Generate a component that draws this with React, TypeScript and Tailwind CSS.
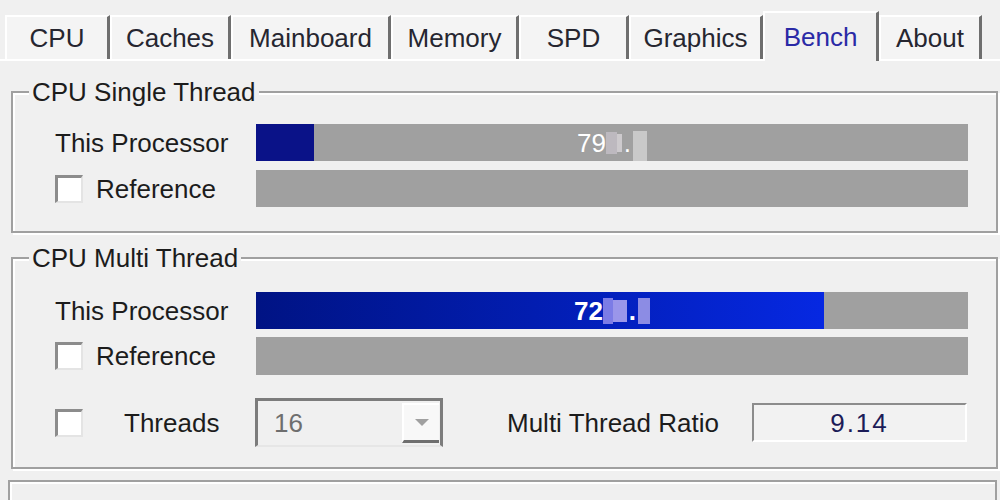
import React from 'react'

const tabs = [
  { label: 'CPU', w: 'w-[105px]' },
  { label: 'Caches', w: 'w-[121px]' },
  { label: 'Mainboard', w: 'w-[160px]' },
  { label: 'Memory', w: 'w-[128px]' },
  { label: 'SPD', w: 'w-[110px]' },
  { label: 'Graphics', w: 'w-[134px]' },
  { label: 'Bench', w: 'w-[116px]', active: true },
  { label: 'About', w: 'w-[103px]' },
]

const Group = ({ title, className, children }: { title: string; className: string; children: React.ReactNode }) => {
  return (
    <div className={`border-2 border-[#a0a0a0] shadow-[inset_2px_2px_0_#ffffff,2px_2px_0_#ffffff] ${className}`}>
      <div className="-mt-[14px] ml-[16px] w-fit bg-[#f0f0f0] px-[3px] leading-[26px]">{title}</div>
      {children}
    </div>
  )
}

const Checkbox = () => (
  <div className="w-[28px] h-[28px] shrink-0 bg-white border-t-[3px] border-l-[3px] border-r-2 border-b-2 border-t-[#8c8c8c] border-l-[#8c8c8c] border-r-[#e4e4e4] border-b-[#e4e4e4]" />
)

const Bar = ({ h, children }: { h: string; children?: React.ReactNode }) => (
  <div className={`grid w-[712px] bg-[#a0a0a0] ${h}`}>{children}</div>
)

export default function App() {
  return (
    <div className="w-[1000px] h-[500px] overflow-hidden bg-[#f0f0f0] text-[26px] leading-[26px] text-[#1c1c1c] font-['Liberation_Sans',Arial,sans-serif]">
      {/* tab strip */}
      <div className="flex items-end h-[59px] pl-[5px]">
        {tabs.map((t) => (
          <div
            key={t.label}
            className={`flex items-center justify-center leading-none border-t-2 border-l-2 border-r-[3px] border-t-white border-l-white border-r-[#6e6e6e] ${t.w} ${
              t.active ? 'relative z-10 h-[50px] -mb-[2px] bg-[#f0f0f0] text-[#2a2aa6]' : 'h-[44px] bg-[#f4f4f4] text-[#262630]'
            }`}
          >
            {t.label}
          </div>
        ))}
      </div>

      <div className="border-t-2 border-white">
        <Group title="CPU Single Thread" className="mt-[30px] ml-[11px] mr-[2px] pb-[24px]">
          <div className="flex items-center mt-[19px]">
            <div className="w-[243px] pl-[42px]">This Processor</div>
            <Bar h="h-[37px]">
              <div className="col-start-1 row-start-1 w-[58px] h-full bg-[#0a1288]" />
              <div className="col-start-1 row-start-1 flex items-center justify-center text-white leading-none">
                <span>79</span>
                <span className="inline-block w-[11px] h-[22px] bg-[#bdb9bf]" />
                <span className="inline-block w-[5px] h-[18px] bg-[#cdcacd]" />
                <span className="px-[2px]">.</span>
                <span className="inline-block w-[14px] h-[30px] mt-[6px] bg-[#c9c9c9]" />
              </div>
            </Bar>
          </div>
          <div className="flex items-center mt-[9px]">
            <div className="w-[243px] pl-[42px] flex items-center gap-[13px]">
              <Checkbox />
              <span>Reference</span>
            </div>
            <Bar h="h-[37px]" />
          </div>
        </Group>

        <Group title="CPU Multi Thread" className="mt-[24px] ml-[11px] mr-[2px] pb-[20px]">
          <div className="flex items-center mt-[21px]">
            <div className="w-[243px] pl-[42px]">This Processor</div>
            <Bar h="h-[37px]">
              <div className="col-start-1 row-start-1 w-[568px] h-full bg-linear-to-r from-[#001384] to-[#0628e2]" />
              <div className="col-start-1 row-start-1 flex items-center justify-center text-white leading-none font-bold">
                <span>72</span>
                <span className="inline-block w-[10px] h-[26px] bg-[#7c7ce6]" />
                <span className="inline-block w-[14px] h-[22px] bg-[#9a96ea]" />
                <span className="px-[2px]">.</span>
                <span className="inline-block w-[12px] h-[26px] bg-[#8c8ce4]" />
              </div>
            </Bar>
          </div>
          <div className="flex items-center mt-[8px]">
            <div className="w-[243px] pl-[42px] flex items-center gap-[13px]">
              <Checkbox />
              <span>Reference</span>
            </div>
            <Bar h="h-[38px]" />
          </div>
          <div className="flex items-center mt-[23px]">
            <div className="w-[242px] pl-[42px] flex items-center gap-[41px]">
              <Checkbox />
              <span>Threads</span>
            </div>
            <div className="w-[188px] h-[49px] flex items-stretch bg-[#f0f0f0] border-t-[3px] border-l-[3px] border-r-[3px] border-b-2 border-t-[#7c7c7c] border-l-[#7c7c7c] border-r-[#7c7c7c] border-b-[#e6e6e6]">
              <div className="flex-1 flex items-center pl-[16px] text-[#6e6e6e]">16</div>
              <div className="w-[37px] my-[2px] mr-[1px] flex items-center justify-center bg-[#f8f8f8] border-t-2 border-l-2 border-b-[3px] border-t-white border-l-white border-b-[#6e6e6e]">
                <svg width="14" height="8" viewBox="0 0 14 8">
                  <path d="M0 0 H14 L7 7 Z" fill="#a0a0a0" />
                </svg>
              </div>
            </div>
            <div className="w-[309px] pl-[64px]">Multi Thread Ratio</div>
            <div className="w-[215px] h-[39px] flex items-center justify-center bg-[#f2f2f2] tracking-[2px] text-[#1c1c58] border-t-2 border-l-2 border-r-2 border-b-2 border-t-[#8c8c8c] border-l-[#8c8c8c] border-r-white border-b-white">
              9.14
            </div>
          </div>
        </Group>

        <div className="mt-[11px] ml-[8px] mr-[3px] h-[40px] border-2 border-[#a0a0a0] shadow-[inset_2px_2px_0_#ffffff]" />
      </div>
    </div>
  )
}
